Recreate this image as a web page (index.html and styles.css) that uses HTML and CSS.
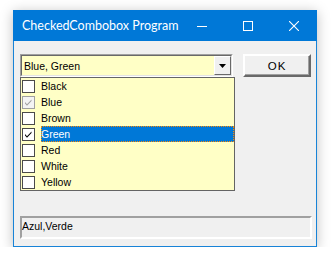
FILE: index.html
```html
<!DOCTYPE html>
<html lang="en">
<head>
    <meta charset="UTF-8">
    <title>CheckedCombobox Program</title>
    <link rel="stylesheet" href="styles.css">
</head>
<body>

<div class="window">
    <div class="titlebar">
        <span class="title">CheckedCombobox Program</span>
        <div class="caption-buttons">
            <div class="cap-btn">
                <svg width="10" height="10" viewBox="0 0 10 10"><path d="M0 5.5h10" stroke="#fff" stroke-width="1"/></svg>
            </div>
            <div class="cap-btn">
                <svg width="10" height="10" viewBox="0 0 10 10"><rect x="0.5" y="0.5" width="9" height="9" fill="none" stroke="#fff" stroke-width="1"/></svg>
            </div>
            <div class="cap-btn">
                <svg width="10" height="10" viewBox="0 0 10 10"><path d="M0 0L10 10M10 0L0 10" stroke="#fff" stroke-width="1.1"/></svg>
            </div>
        </div>
    </div>

    <div class="client">
        <div class="top-row">
            <div class="combo">
                <div class="combo-inner">
                    <span class="combo-text">Blue, Green</span>
                    <div class="drop-btn">
                        <svg width="7" height="4" viewBox="0 0 7 4"><path d="M0 0h7L3.5 4z" fill="#000"/></svg>
                    </div>
                </div>
                <!-- dropdown list of the checked combo -->
                <ul class="dropdown" id="itemList"></ul>
            </div>
            <button class="ok-btn">OK</button>
        </div>

        <div class="status">Azul,Verde</div>
    </div>
</div>

<script>
// Items shown in the checked list
const items = [
    { name: 'Black', checked: false },
    { name: 'Blue', checked: true, disabled: true },
    { name: 'Brown', checked: false },
    { name: 'Green', checked: true, selected: true },
    { name: 'Red', checked: false },
    { name: 'White', checked: false },
    { name: 'Yellow', checked: false }
];

const checkSvg = '<svg width="9" height="9" viewBox="0 0 9 9"><path d="M1 4l2 2.2L7.5 1.5v1.6L3 7.8 1 5.6z" fill="currentColor"/></svg>';

const list = document.getElementById('itemList');
items.forEach(item => {
    const li = document.createElement('li');
    li.className = 'item' + (item.selected ? ' selected' : '');
    li.innerHTML = `
        <span class="check ${item.disabled ? 'disabled' : ''}">${item.checked ? checkSvg : ''}</span>
        <span class="label">${item.name}</span>
    `;
    list.appendChild(li);
});
</script>

</body>
</html>
```

FILE: styles.css
```css
/* Page */
body {
    margin: 0;
    background: #ffffff;
    font-family: 'Liberation Sans', Arial, sans-serif;
    font-size: 10.5px;
    color: #000;
}

/* Window frame */
.window {
    margin: 10px 0 0 13px;
    width: 302px;
    border: 1px solid #1883d7;
    border-top: none;
    background: #f0f0f0;
    box-shadow: 0 2px 12px rgba(0, 0, 0, 0.25);
}

.titlebar {
    height: 31px;
    margin: 0 -1px;
    background: #0078d7;
    display: flex;
    align-items: center;
    justify-content: space-between;
}

.title {
    color: #fff;
    font-family: Lato, 'Open Sans', sans-serif;
    font-size: 12.5px;
    white-space: nowrap;
    padding-left: 9px;
}

.caption-buttons {
    display: flex;
    height: 100%;
}

.cap-btn {
    width: 46px;
    display: flex;
    align-items: center;
    justify-content: center;
}

/* Client area */
.client {
    height: 205px;
    box-sizing: border-box;
    padding: 13px 5px 7px 6px;
    display: flex;
    flex-direction: column;
}

.top-row {
    display: flex;
    gap: 10px;
}

/* Combo box */
.combo {
    position: relative;
    width: 213px;
    height: 23px;
    box-sizing: border-box;
    border: 1px solid;
    border-color: #a0a0a0 #ffffff #ffffff #a0a0a0;
}

.combo-inner {
    height: 100%;
    box-sizing: border-box;
    border: 1px solid;
    border-color: #696969 #e3e3e3 #e3e3e3 #696969;
    background: #ffffc6;
    display: flex;
    align-items: center;
}

.combo-text {
    flex: 1;
    padding-left: 2px;
}

.drop-btn {
    width: 17px;
    height: 100%;
    box-sizing: border-box;
    background: #f0f0f0;
    border: 1px solid;
    border-color: #ffffff #696969 #696969 #ffffff;
    display: flex;
    align-items: center;
    justify-content: center;
}

/* Dropdown list */
.dropdown {
    position: absolute;
    left: -1px;
    top: 22px;
    width: 215px;
    box-sizing: border-box;
    margin: 0;
    padding: 0;
    list-style: none;
    background: #ffffc6;
    border: 1px solid #646464;
}

.item {
    height: 16px;
    display: flex;
    align-items: center;
    padding-left: 1px;
}

.check {
    width: 13px;
    height: 13px;
    box-sizing: border-box;
    border: 1px solid #4a4a4a;
    background: #fff;
    display: flex;
    align-items: center;
    justify-content: center;
    color: #000;
    flex-shrink: 0;
}

.check.disabled {
    border-color: #a0a0a0;
    background: #f4f4f4;
    color: #a0a0a0;
}

.label {
    flex: 1;
    height: 16px;
    line-height: 16px;
    margin-left: 6px;
}

.item.selected .label {
    background: #0078d7;
    color: #fff;
    outline: 1px dotted #ff8a00;
    outline-offset: -1px;
}

/* OK button */
.ok-btn {
    width: 68px;
    height: 23px;
    padding: 0;
    background: #f0f0f0;
    border: 2px solid;
    border-color: #ffffff #696969 #696969 #ffffff;
    box-shadow: inset -1px -1px 0 #a0a0a0;
    font-family: 'Liberation Sans', Arial, sans-serif;
    font-weight: normal;
    font-size: 11.5px;
    letter-spacing: 1px;
    color: #000;
}

/* Status panel */
.status {
    margin-top: auto;
    width: 292px;
    height: 23px;
    box-sizing: border-box;
    border: 2px solid;
    border-color: #a0a0a0 #ffffff #ffffff #a0a0a0;
    padding: 2px 0 0 0;
    line-height: 12px;
}
```
